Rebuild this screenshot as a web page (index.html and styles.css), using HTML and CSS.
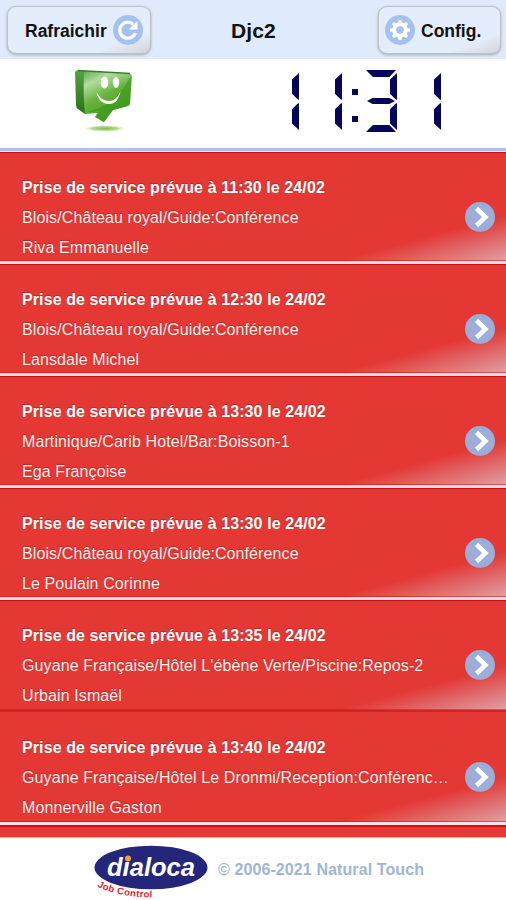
FILE: index.html
```html
<!DOCTYPE html>
<html lang="fr">
<head>
<meta charset="utf-8">
<title>Djc2</title>
<link rel="stylesheet" href="styles.css">
</head>
<body>
<header class="bar">
  <button class="btn refresh"><span class="label">Rafraichir</span>
    <svg class="icon" viewBox="0 0 30 30"><circle cx="15" cy="15" r="15" fill="#a6c1ec"/><path d="M20.300 9.400A8 8 0 1 0 22.300 18" fill="none" stroke="#fff" stroke-width="3.200"/><path d="M24.500 6v8.600h-8.800z" fill="#fff"/></svg>
  </button>
  <h1 class="title">Djc2</h1>
  <button class="btn config">
    <svg class="icon" viewBox="0 0 30 30"><circle cx="15" cy="15" r="15" fill="#a6c1ec"/><g fill="#fff"><circle cx="15" cy="15" r="7.800"/><g id="teeth"><path id="tooth" d="M13 8l.6-3h2.800l.6 3v14l-.6 3h-2.800l-.6-3z"/><use href="#tooth" transform="rotate(45 15 15)"/></g><use href="#teeth" transform="rotate(90 15 15)"/></g><circle cx="15" cy="15" r="3.800" fill="#a6c1ec"/></svg>
    <span class="label">Config.</span>
  </button>
</header>
<section class="status">
  <svg class="mascot" viewBox="0 0 60 66">
    <defs>
      <linearGradient id="face" x1="0" y1="0" x2=".45" y2="1"><stop offset="0" stop-color="#5dac46"/><stop offset=".25" stop-color="#b4dca0"/><stop offset=".55" stop-color="#68b43e"/><stop offset="1" stop-color="#419a20"/></linearGradient>
      <linearGradient id="side" x1="0" y1="0" x2="0" y2="1"><stop offset="0" stop-color="#56a045"/><stop offset="1" stop-color="#277119"/></linearGradient>
      <radialGradient id="ground"><stop offset="0" stop-color="#7eb844"/><stop offset=".55" stop-color="#b5d88c"/><stop offset="1" stop-color="#fff" stop-opacity="0"/></radialGradient>
    </defs>
    <ellipse cx="32" cy="60.500" rx="23" ry="3.500" fill="url(#ground)"/>
    <path d="M2 4Q3 2 6 2L12 3 14 45 12 46 5 41Q3 40 3 37z" fill="url(#side)"/>
    <path d="M11 3L57 5.500Q59 6 59 9L57 35Q57 37 55 38L40 42 31 54 22 49 25 45 12 46Q10 30 11 3z" fill="url(#face)"/>
    <path d="M58 8L57 35Q57 37 55 38L40 42 31 54 22 49 26 43 14 44Q42 38 58 8z" fill="#3c991c" opacity=".65"/>
    <path d="M5 2.500L57 5.500" stroke="#377f2d" stroke-width="1.300"/>
    <ellipse cx="31.500" cy="14.500" rx="3.800" ry="6" fill="#fff"/><ellipse cx="43" cy="14.500" rx="3.200" ry="5.400" fill="#fff"/>
    <path d="M23.500 24Q26 36 36 36Q45 36 47.500 23.500Q43 33 36 33Q28 33 23.500 24z" fill="#fff"/>
  </svg>
  <div class="clock" role="img" aria-label="11:31">
    <div class="digit"><i class="seg upper"></i><i class="seg lower"></i></div>
    <div class="digit"><i class="seg upper"></i><i class="seg lower"></i></div>
    <div class="colon"><i></i><i></i></div>
    <div class="digit"><i class="seg top"></i><i class="seg upper"></i><i class="seg middle"></i><i class="seg lower"></i><i class="seg bottom"></i></div>
    <div class="digit"><i class="seg upper"></i><i class="seg lower"></i></div>
  </div>
</section>
<main class="list">
  <article class="row"><div class="info"><h2>Prise de service prévue à 11:30 le 24/02</h2><p>Blois/Château royal/Guide:Conférence</p><p>Riva Emmanuelle</p></div><svg class="go" viewBox="0 0 30 30"><circle cx="15" cy="15" r="15"/><path d="M11.500 6.500L20.500 15l-9 8.500"/></svg></article>
  <article class="row"><div class="info"><h2>Prise de service prévue à 12:30 le 24/02</h2><p>Blois/Château royal/Guide:Conférence</p><p>Lansdale Michel</p></div><svg class="go" viewBox="0 0 30 30"><circle cx="15" cy="15" r="15"/><path d="M11.500 6.500L20.500 15l-9 8.500"/></svg></article>
  <article class="row"><div class="info"><h2>Prise de service prévue à 13:30 le 24/02</h2><p>Martinique/Carib Hotel/Bar:Boisson-1</p><p>Ega Françoise</p></div><svg class="go" viewBox="0 0 30 30"><circle cx="15" cy="15" r="15"/><path d="M11.500 6.500L20.500 15l-9 8.500"/></svg></article>
  <article class="row"><div class="info"><h2>Prise de service prévue à 13:30 le 24/02</h2><p>Blois/Château royal/Guide:Conférence</p><p>Le Poulain Corinne</p></div><svg class="go" viewBox="0 0 30 30"><circle cx="15" cy="15" r="15"/><path d="M11.500 6.500L20.500 15l-9 8.500"/></svg></article>
  <article class="row merged"><div class="info"><h2>Prise de service prévue à 13:35 le 24/02</h2><p>Guyane Française/Hôtel L'ébène Verte/Piscine:Repos-2</p><p>Urbain Ismaël</p></div><svg class="go" viewBox="0 0 30 30"><circle cx="15" cy="15" r="15"/><path d="M11.500 6.500L20.500 15l-9 8.500"/></svg></article>
  <article class="row last"><div class="info"><h2>Prise de service prévue à 13:40 le 24/02</h2><p>Guyane Française/Hôtel Le Dronmi/Reception:Conférenc…</p><p>Monnerville Gaston</p></div><svg class="go" viewBox="0 0 30 30"><circle cx="15" cy="15" r="15"/><path d="M11.500 6.500L20.500 15l-9 8.500"/></svg></article>
  <div class="next"></div>
</main>
<footer class="footer">
  <svg class="logo" viewBox="0 0 116 58">
    <defs><path id="curve" d="M3 44.500Q24 55.500 62 55.500"/></defs>
    <ellipse cx="57" cy="25.500" rx="56.500" ry="21.800" fill="#24267a"/>
    <text class="brand" x="13" y="34" textLength="88" lengthAdjust="spacingAndGlyphs">dialoca</text>
    <circle cx="34" cy="16.500" r="3" fill="#efa33f"/>
    <text class="sub"><textPath href="#curve" textLength="57">Job Control</textPath></text>
  </svg>
  <span class="copy">© 2006-2021 Natural Touch</span>
</footer>
</body>
</html>
```
FILE: styles.css
```css
* { box-sizing: border-box; }
body {
  margin: 0;
  width: 506px;
  height: 900px;
  overflow: hidden;
  background: #fff;
  font-family: "Liberation Sans", sans-serif;
}
.bar {
  display: grid;
  grid-template-columns: 144px 1fr 123px;
  height: 59px;
  padding: 6px 5px 5px 7px;
  background: #dfeafd;
}
.btn {
  display: flex;
  align-items: center;
  height: 48px;
  padding: 0 7px;
  border: 1.5px solid #bfc1c3;
  border-radius: 9px;
  background: linear-gradient(160deg, transparent 78%, #d3d5d8 100%), #e4edfc;
  box-shadow: 0 1px 3px #999c;
  color: #111;
  font: bold 17.500px "Liberation Sans", sans-serif;
}
.refresh { justify-content: space-between; padding-left: 17px; }
.config { gap: 6px; padding-left: 6px; }
.btn .label { padding-top: 2px; }
.icon { width: 30px; height: 30px; flex: none; }
.title {
  margin: 0 18px 0 0;
  padding-top: 13px;
  text-align: center;
  font-size: 21px;
  line-height: 24px;
  letter-spacing: .1px;
  color: #111;
  transform: translateX(-2px);
}
.status {
  display: flex;
  justify-content: space-between;
  height: 92px;
  padding: 9px 65px 0 73px;
  border-bottom: 3px solid #a9c4ec;
}
.mascot { width: 60px; height: 66px; }
.clock { display: flex; padding-top: 2px; }
.digit {
  display: grid;
  grid-template: 62px / 31px;
  margin-left: 12px;
}
.digit:first-child { margin-left: 0; }
.digit:last-child { margin-left: 13px; }
.seg { grid-area: 1 / 1; background: #05055c; }
.upper, .lower {
  justify-self: end;
  width: 7px;
  height: 27px;
  margin-top: 3px;
  clip-path: polygon(100% 0, 100% 100%, 75% 96%, 0 77%, 0 24%);
}
.lower { margin-top: 33px; clip-path: polygon(100% 0, 100% 100%, 0 76%, 0 23%, 75% 4%); }
.top, .bottom { width: 30px; height: 7px; clip-path: polygon(0 0, 100% 0, 78% 100%, 23% 100%); }
.bottom { align-self: end; clip-path: polygon(23% 0, 78% 0, 100% 100%, 0 100%); }
.middle { width: 28px; height: 6px; margin-left: 1px; align-self: center; clip-path: polygon(0 50%, 20% 0, 80% 0, 100% 50%, 80% 100%, 20% 100%); }
.colon {
  display: flex;
  flex-direction: column;
  gap: 21px;
  width: 12px;
  padding: 19px 0 0 10px;
}
.colon i { width: 6px; height: 6px; flex: none; background: #05055c; }
.list { height: 686px; background: #e43835; border-top: 1px solid #e8dce7; }
.row {
  display: flex;
  justify-content: space-between;
  height: 112.1px;
  padding: 25px 11px 0 22px;
  border-top: 1.5px solid #d20d10;
  border-bottom: 3px solid #f5dfe8;
  background:
    linear-gradient(#d20d1088, #d20d1088) bottom / 100% 1px no-repeat,
    linear-gradient(to bottom right, transparent 50%, #de6f7099 66%, #e0a0a8 100%) right bottom / 170px 46px no-repeat,
    #e43835;
  background-origin: padding-box;
  color: #fff0ed;
}
.merged { border-bottom: 2px solid #cf2423; }
.merged + .row { border-top-color: #e43835; }
.info { width: 430px; text-shadow: 0 -1px 1px #b92a28; }
.info h2, .info p {
  margin: 0;
  height: 30px;
  line-height: 20px;
  font-size: 16px;
  letter-spacing: .1px;
  white-space: nowrap;
}
.info h2 { color: #fff; }
.go { width: 30px; height: 30px; margin-top: 24px; flex: none; }
.go circle { fill: #9badd8; }
.go path { fill: none; stroke: #fff; stroke-width: 4.500; }
.next { height: 13px; border-top: 2px solid #d20d10; }
.footer {
  display: flex;
  height: 63px;
  border-top: 1px solid #c9b6c7;
  padding-left: 94px;
  background: #fff;
}
.logo { width: 116px; height: 58px; margin-top: 4px; flex: none; }
.brand { font: italic bold 26px "Liberation Sans", sans-serif; fill: #fff; }
.sub { font: bold 9.500px "Liberation Sans", sans-serif; fill: #df2634; }
.copy {
  margin: 22px 0 0 8px;
  font-size: 16px;
  font-weight: bold;
  line-height: 20px;
  letter-spacing: .1px;
  color: #9eb6d4;
  white-space: nowrap;
}
```
